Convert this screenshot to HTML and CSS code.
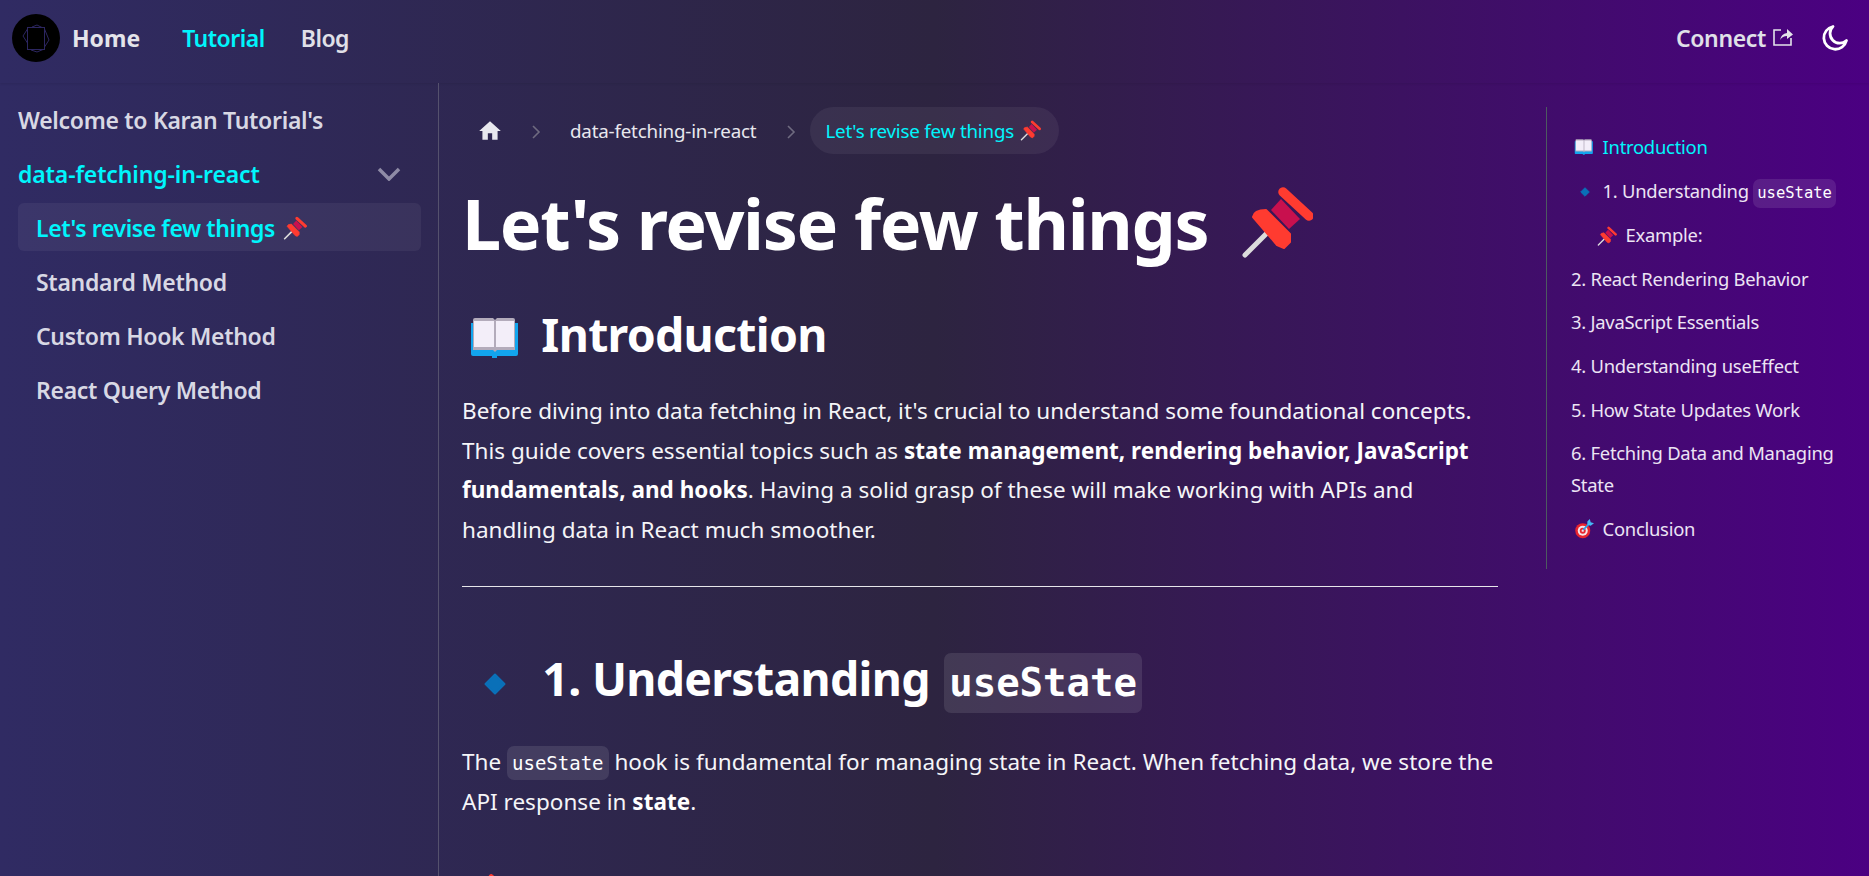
FILE: index.html
```html
<!DOCTYPE html>
<html lang="en">
<head>
<meta charset="utf-8">
<title>Let's revise few things</title>
<link rel="stylesheet" href="styles.css">
</head>
<body>
<svg class="defs" aria-hidden="true">
  <symbol id="pin" viewBox="10 8 72 74">
    <path d="M14 78 36 56" stroke="#dcdcdc" stroke-width="5" stroke-linecap="round" fill="none"/>
    <path d="M40 33 50 22 69 42 58 52Z" fill="#c8104e"/>
    <path d="M52 15 78 39" stroke="#ff3b30" stroke-width="9.500" stroke-linecap="round" fill="none"/>
    <path d="M22 40Q23 33 35 33L59 57V65L53 71 46 68Z" fill="#ff3b30" stroke="#ff3b30" stroke-width="2" stroke-linejoin="round"/>
  </symbol>
  <symbol id="book" viewBox="10 12 52 44">
    <path d="M12 19H59V50Q59 52 57 52H38V54H33V52H14Q12 52 12 50Z" fill="#12a5ee"/>
    <path d="M16 14H34L36 16 38 14H54Q56 14 56 16V46H38L36 48 34 46H14V16Q14 14 16 14Z" fill="#b3abbb"/>
    <path d="M15 17H35V43H15ZM37 17H55V43H37Z" fill="#f3eef9"/>
  </symbol>
  <symbol id="target" viewBox="0 0 24 24">
    <circle cx="10.500" cy="14" r="9" fill="#e8252f"/>
    <circle cx="10.500" cy="14" r="6" fill="#f6e6ea"/>
    <circle cx="10.500" cy="14" r="3.600" fill="#e8252f"/>
    <circle cx="10.500" cy="14" r="1.400" fill="#f6e6ea"/>
    <path d="M11 13 19 5" stroke="#2b9fe8" stroke-width="2"/>
    <path d="M16 3 19 0 20 4 24 5 20 8 16 7Z" fill="#45b8f5"/>
  </symbol>
  <symbol id="diamond" viewBox="0 0 22 22">
    <path d="M11 1.500 20.500 11 11 20.500 1.500 11Z" fill="#0a70b8" stroke="#0a70b8" stroke-width="2" stroke-linejoin="round"/>
  </symbol>
</svg>
<header class="navbar">
  <div class="nav-left">
    <a class="brand" href="#">
      <svg class="logo" viewBox="0 0 48 48" aria-hidden="true">
        <circle cx="24" cy="24" r="24" fill="#000"/>
        <g fill="none" stroke="#2c2660" stroke-width="1">
          <rect x="15.500" y="13.500" width="17" height="22"/>
          <path d="M15.500 15 11 22 15.500 29M32.500 15 37 26 32.500 33M20 13 25 11 30 13.500M19 36 25 38 31 35.500"/>
        </g>
      </svg>
      <span>Home</span>
    </a>
    <a class="nav-link active" href="#">Tutorial</a>
    <a class="nav-link" href="#">Blog</a>
  </div>
  <div class="nav-right">
    <a class="nav-link connect" href="#">Connect
      <svg class="ext" viewBox="0 0 20 20" aria-hidden="true">
        <path d="M8 3H1V18H18V11" fill="none" stroke="#e3e3ea" stroke-width="1.600"/>
        <path d="M7 13Q8 7 14 6V2L20 7.500 14 12V9Q9.500 9 7 13Z" fill="#e3e3ea"/>
      </svg>
    </a>
    <svg class="moon" viewBox="0 0 28 28" aria-hidden="true">
      <path d="M12 2.500A11.500 11.500 0 1 0 25.500 16.500 9.500 9.500 0 0 1 12 2.500Z" fill="none" stroke="#fff" stroke-width="2.800" stroke-linejoin="round"/>
    </svg>
  </div>
</header>
<div class="layout">
  <aside class="sidebar">
    <a class="side-item" href="#">Welcome to Karan Tutorial's</a>
    <a class="side-item side-cat" href="#">data-fetching-in-react
      <svg class="chev" viewBox="0 0 24 14" aria-hidden="true"><path d="M2 2 12 12 22 2" fill="none" stroke="#8f8ba6" stroke-width="3.500"/></svg>
    </a>
    <ul class="side-list">
      <li><a class="side-sub current" href="#">Let's revise few things <svg class="emoji e-side"><use href="#pin"/></svg></a></li>
      <li><a class="side-sub" href="#">Standard Method</a></li>
      <li><a class="side-sub" href="#">Custom Hook Method</a></li>
      <li><a class="side-sub" href="#">React Query Method</a></li>
    </ul>
  </aside>
  <main class="content">
    <nav class="crumbs">
      <svg class="home" viewBox="0 0 24 24" aria-hidden="true"><path d="M10 20v-6h4v6h5v-8h3L12 3 2 12h3v8z" fill="#e8e8ee"/></svg>
      <svg class="sep" viewBox="0 0 10 16" aria-hidden="true"><path d="M2 2 8 8 2 14" fill="none" stroke="#6f6b80" stroke-width="1.600"/></svg>
      <span class="crumb">data-fetching-in-react</span>
      <svg class="sep sep2" viewBox="0 0 10 16" aria-hidden="true"><path d="M2 2 8 8 2 14" fill="none" stroke="#6f6b80" stroke-width="1.600"/></svg>
      <span class="crumb pill">Let's revise few things <svg class="emoji e-crumb"><use href="#pin"/></svg></span>
    </nav>
    <h1 class="title">Let's revise few things <svg class="emoji e-h1"><use href="#pin"/></svg></h1>
    <h2 class="head head-intro"><svg class="emoji e-book"><use href="#book"/></svg> Introduction</h2>
    <p class="para">Before diving into data fetching in React, it's crucial to understand some foundational concepts. This guide covers essential topics such as <strong>state management, rendering behavior, JavaScript fundamentals, and hooks</strong>. Having a solid grasp of these will make working with APIs and handling data in React much smoother.</p>
    <hr class="rule">
    <h2 class="head head-one"><svg class="emoji e-dia"><use href="#diamond"/></svg> 1. Understanding <code class="chip-big">useState</code></h2>
    <p class="para para-two">The <code class="chip">useState</code> hook is fundamental for managing state in React. When fetching data, we store the API response in <strong>state</strong>.</p>
    <h3 class="sub"><svg class="emoji e-h3"><use href="#pin"/></svg><span>Example:</span></h3>
  </main>
  <aside class="toc-wrap">
    <ul class="toc">
      <li class="toc-item toc-on"><svg class="emoji e-toc"><use href="#book"/></svg> Introduction</li>
      <li class="toc-item toc-l2"><svg class="emoji e-toc-d"><use href="#diamond"/></svg> 1. Understanding <code class="chip-toc">useState</code></li>
      <li class="toc-item toc-l3"><svg class="emoji e-toc-p"><use href="#pin"/></svg> Example:</li>
      <li class="toc-item">2. React Rendering Behavior</li>
      <li class="toc-item">3. JavaScript Essentials</li>
      <li class="toc-item">4. Understanding useEffect</li>
      <li class="toc-item">5. How State Updates Work</li>
      <li class="toc-item">6. Fetching Data and Managing State</li>
      <li class="toc-item"><svg class="emoji e-toc"><use href="#target"/></svg> Conclusion</li>
    </ul>
  </aside>
</div>
</body>
</html>
```
FILE: styles.css
```css
* { box-sizing: border-box; }
html, body { margin: 0; height: 876px; overflow: hidden; }
body {
  font-family: "Noto Sans", "Open Sans", sans-serif;
  color: #f5f5f8;
  background: linear-gradient(to right, #302b63, #2d2440 50%, #4b0082);
  font-size: 22.500px;
}
a { color: inherit; text-decoration: none; }
.defs { display: none; }
.emoji { display: inline-block; vertical-align: middle; }

.navbar {
  height: 83px;
  display: flex;
  align-items: center;
  justify-content: space-between;
  padding: 0 20px 7px 12px;
  box-shadow: 0 1px 2px rgba(0,0,0,.08);
}
.nav-left, .nav-right, .brand { display: flex; align-items: center; }
.brand { gap: 12px; font-weight: 700; color: #e4e4ea; font-size: 23px; }
.logo { width: 48px; height: 48px; }
.nav-link { font-size: 23px; font-weight: 600; color: #e0e0e8; letter-spacing: -.5px; margin-left: 36px; }
.nav-link.active { color: #00f5fc; margin-left: 42px; }
.nav-right { gap: 28px; }
.connect { display: flex; align-items: center; gap: 7px; letter-spacing: -.35px; }
.ext { width: 20px; height: 20px; margin-top: -3px; }
.moon { width: 28px; height: 28px; }

.layout { display: grid; grid-template-columns: 439px 1107px 1fr; height: 793px; }
.sidebar { border-right: 1px solid #55516d; padding: 14px 17px 0 18px; }
.side-item {
  display: flex; align-items: center; justify-content: space-between;
  height: 48px; margin-bottom: 6px; padding-bottom: 2px;
  font-size: 23px; font-weight: 600; color: #d8d8e4; letter-spacing: -.3px;
}
.side-cat { color: #00f5fc; margin-bottom: 4px; padding-right: 20px; letter-spacing: -.12px; }
.chev { width: 24px; height: 14px; }
.side-list { list-style: none; margin: 0; padding: 0; display: flex; flex-direction: column; gap: 6px; }
.side-sub {
  display: flex; align-items: center; gap: 8px;
  height: 48px; padding: 1px 18px 0;
  font-size: 23px; font-weight: 600; color: #d8d8e4; letter-spacing: -.3px;
  border-radius: 6px;
}
.current { background: rgba(255,255,255,.055); color: #00f5fc; letter-spacing: -.4px; }
.e-side { width: 24px; height: 24px; }

.content { padding: 24px 48px 0 23px; min-width: 0; }
.crumbs { display: flex; align-items: center; height: 47px; font-size: 18.800px; letter-spacing: -.2px; }
.home { width: 26px; height: 26px; margin-left: 15px; }
.sep { width: 10px; height: 16px; margin: 2px 0 0 28px; }
.crumb { margin-left: 29px; color: #e8e8ee; }
.sep2 { margin-left: 30px; }
.pill {
  display: flex; align-items: center; gap: 6px;
  height: 47px; margin-left: 14px; padding: 0 18px 0 15px;
  border-radius: 24px; background: rgba(255,255,255,.06); color: #00f5fc;
}
.e-crumb { width: 21px; height: 21px; }
.title { margin: 27px 0 0; font-size: 70px; line-height: 84px; font-weight: 700; color: #fff; letter-spacing: -1.300px; }
.e-h1 { width: 72px; height: 74px; margin-left: 16px; vertical-align: -9px; }
.head { margin: 0; font-size: 46.400px; font-weight: 700; color: #fff; letter-spacing: -.7px; }
.head-intro { margin-top: 40px; line-height: 58px; }
.e-book { width: 52px; height: 44px; margin: 0 9px 0 7px; vertical-align: -8px; }
.para { margin: 28px 0 0; line-height: 39.600px; letter-spacing: .02px; }
.para strong { font-weight: 700; color: #fff; }
.rule { margin: 37px 0 0; border: 0; height: 1px; background: #e6e6ea; }
.head-one { margin-top: 61px; line-height: 60px; }
.e-dia { width: 22px; height: 22px; margin: 0 25px 0 22px; vertical-align: 1px; }
.chip-big {
  display: inline-block; font-family: "DejaVu Sans Mono", monospace; font-size: 39px; font-weight: 700;
  line-height: 60px; padding: 0 5px; margin-left: 3px; border-radius: 7px;
  background: rgba(255,255,255,.1); letter-spacing: 0;
}
.para-two { margin-top: 29px; }
.chip {
  display: inline-block; line-height: 34px;
  font-family: "DejaVu Sans Mono", monospace; font-size: 19px; letter-spacing: 0; color: #fff;
  padding: 0 5px; border-radius: 7px; background: rgba(255,255,255,.1);
}
.sub { display: flex; align-items: flex-start; gap: 10px; margin: 51px 0 0 6px; font-size: 38px; font-weight: 700; line-height: 48px; }
.sub span { padding-top: 12px; }
.e-h3 { width: 40px; height: 40px; flex: none; }

.toc-wrap { padding: 24px 20px 0 0; }
.toc {
  list-style: none; margin: 0; padding: 24px 0 24px 24px;
  border-left: 1px solid #4d5a60;
  font-size: 18.400px; color: #ece4f4; letter-spacing: -.25px;
}
.toc-item { line-height: 32px; margin-bottom: 11.600px; }
.toc-item:last-child { margin-bottom: 0; }
.toc-on { color: #00f5fc; }
.e-toc { width: 20px; height: 20px; margin-left: 3px; margin-right: 4px; vertical-align: -3px; }
.e-toc-d { width: 10px; height: 10px; margin: 0 8px 0 9px; vertical-align: 1px; }
.e-toc-p { width: 20px; height: 20px; margin: 0 4px 0 1px; vertical-align: -4px; }
.toc-l3 { padding-left: 25px; }
.chip-toc {
  display: inline-block; line-height: 29px;
  font-family: "DejaVu Sans Mono", monospace; font-size: 15.500px; letter-spacing: 0; color: #fff;
  padding: 0 4px; border-radius: 7px; background: rgba(255,255,255,.1);
}
```
